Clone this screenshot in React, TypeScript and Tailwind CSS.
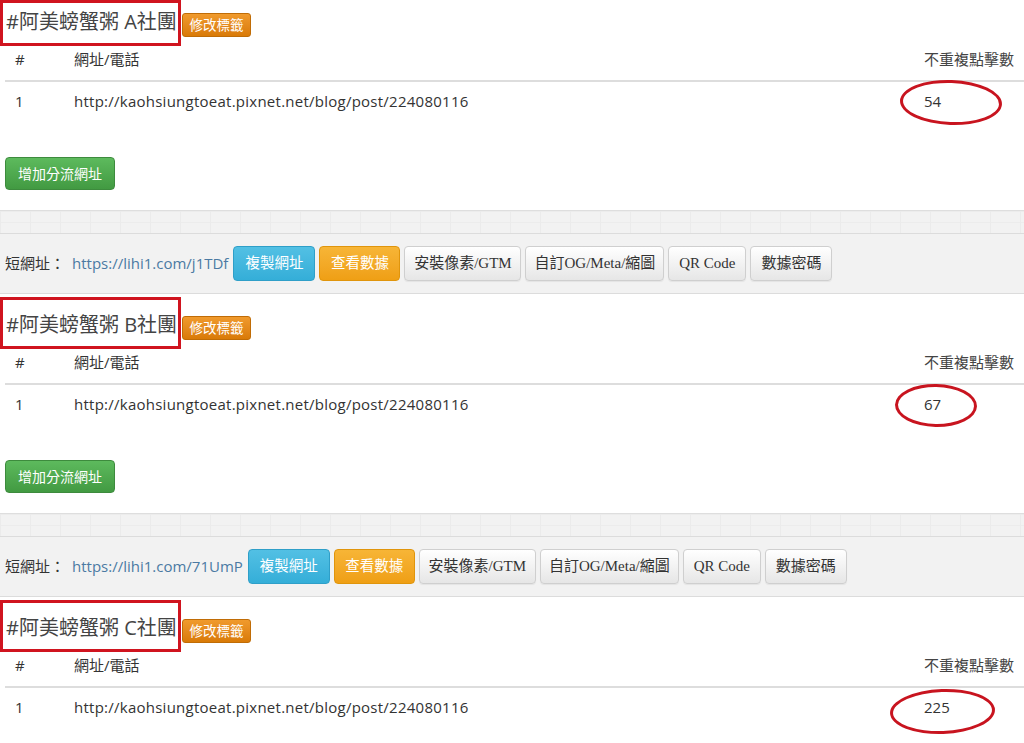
import React from "react";
import clsx from "clsx";

type Group = {
  label: string;
  url: string;
  clicks: string;
  shortUrl: string;
  ring: string;
};

const groups: Group[] = [
  {
    label: "A",
    url: "http://kaohsiungtoeat.pixnet.net/blog/post/224080116",
    clicks: "54",
    shortUrl: "https://lihi1.com/j1TDf",
    ring: "left-[-24px] top-[-2px] w-[102px] h-[45px] rotate-[2deg]",
  },
  {
    label: "B",
    url: "http://kaohsiungtoeat.pixnet.net/blog/post/224080116",
    clicks: "67",
    shortUrl: "https://lihi1.com/71UmP",
    ring: "left-[-29px] top-[-1px] w-[82px] h-[43px] rotate-[1deg]",
  },
  {
    label: "C",
    url: "http://kaohsiungtoeat.pixnet.net/blog/post/224080116",
    clicks: "225",
    shortUrl: "https://lihi1.com/x8Kqa",
    ring: "left-[-34px] top-[1px] w-[105px] h-[45px] -rotate-[2deg]",
  },
];

const btnBase =
  "h-[35px] rounded-[4px] border font-['Liberation_Serif','Noto_Sans_CJK_TC',serif] flex items-center justify-center shrink-0";
const btnDefault =
  "text-[15px] border-[#cfcfcf] bg-gradient-to-b from-white to-[#e6e6e6] text-[#333] shadow-[0_1px_1px_rgba(0,0,0,0.06)]";

function GroupBlock({ g, first }: { g: Group; first: boolean }) {
  return (
    <section className="mb-[3px]">
      {/* title */}
      <div className="flex h-[52px] items-start">
        <div
          className={clsx(
            "w-[181px] border-[3px] border-[#d0141f] pl-[3px] text-[20px] leading-[24px] text-[#444] whitespace-nowrap",
            first ? "mt-[6px] h-[46px] pt-[7px]" : "h-[52px] pt-[13px]"
          )}
        >
          #阿美螃蟹粥 {g.label}社團
        </div>
        <span className="ml-[1px] mt-[19px] flex h-[24px] w-[69px] items-center justify-center rounded-[3px] border border-[#c06c06] bg-gradient-to-b from-[#f09a2c] to-[#d97a06] text-[13.5px] text-white">
          修改標籤
        </span>
      </div>

      {/* table */}
      <div className="ml-[5px]">
        <div className="grid h-[36px] grid-cols-[59px_1fr_100px] items-start border-b-2 border-[#dddddd] pt-[3px] text-[15px] leading-[20px]">
          <div className="pl-[10px]">#</div>
          <div className="pl-[10px]">網址/電話</div>
          <div className="text-[#444]">不重複點擊數</div>
        </div>
        <div className="grid h-[40px] grid-cols-[59px_1fr_100px] items-start pt-[9px] text-[15px] leading-[20px]">
          <div className="pl-[10px]">1</div>
          <div className="pl-[10px] tracking-[0.25px]">{g.url}</div>
          <div className="relative">
            {g.clicks}
            <span
              className={clsx(
                "pointer-events-none absolute rounded-[50%] border-[3.5px] border-[#c8141f] -translate-y-[9px]",
                g.ring
              )}
            />
          </div>
        </div>
      </div>

      <button className="ml-[5px] mt-[35px] flex h-[33px] w-[110px] items-center justify-center rounded-[4px] border border-[#3d8b3d] bg-gradient-to-b from-[#5dba5d] to-[#429a42] text-[14px] text-white">
        增加分流網址
      </button>

      {/* band */}
      <div className="mt-[20px] h-[23px] border-t border-[#dedede] bg-[#f2f2f2] bg-[linear-gradient(90deg,#ebebeb_1px,transparent_1px),linear-gradient(#ececec_1px,transparent_1px)] bg-[length:30px_11px]" />

      {/* short url row */}
      <div className="flex h-[61px] items-center gap-[4px] border-y border-[#dcdcdc] bg-[#f2f2f2] pl-[5px]">
        <span className="text-[15px]">短網址：</span>
        <a className="ml-[3px] mr-[1px] text-[15px] text-[#4b7aa3]">{g.shortUrl}</a>
        <button className={clsx(btnBase, "w-[82px] text-[14.5px] border-[#2f9fc8] bg-gradient-to-b from-[#52c0e4] to-[#34aed8] text-white")}>
          複製網址
        </button>
        <button className={clsx(btnBase, "w-[81px] text-[14.5px] border-[#e0950c] bg-gradient-to-b from-[#f7b536] to-[#ef9f14] text-white")}>
          查看數據
        </button>
        <button className={clsx(btnBase, btnDefault, "w-[117px]")}>安裝像素/GTM</button>
        <button className={clsx(btnBase, btnDefault, "w-[139px]")}>自訂OG/Meta/縮圖</button>
        <button className={clsx(btnBase, btnDefault, "w-[78px]")}>QR Code</button>
        <button className={clsx(btnBase, btnDefault, "w-[82px]")}>數據密碼</button>
      </div>
    </section>
  );
}

export default function App() {
  return (
    <div className="-mt-[6px] min-h-screen bg-white text-[#333] font-['Open_Sans','Noto_Sans_CJK_TC',sans-serif]">
      {groups.map((g, i) => (
        <GroupBlock key={g.label} g={g} first={i === 0} />
      ))}
    </div>
  );
}
